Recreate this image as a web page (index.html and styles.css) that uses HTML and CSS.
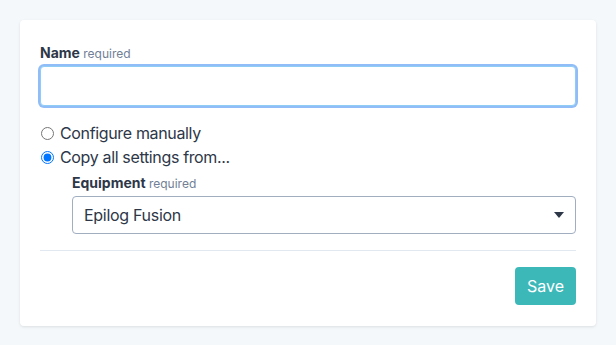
FILE: index.html
```html
<!DOCTYPE html>
<html lang="en">
<head>
  <meta charset="UTF-8" />
  <title>New Equipment</title>
  <link rel="stylesheet" href="styles.css">
</head>
<body>
  <form class="card">
    <div class="field">
      <label class="label" for="name">Name <span class="hint">required</span></label>
      <input type="text" id="name" class="text-input is-focused" />
    </div>

    <div class="choices">
      <label class="choice"><input type="radio" name="mode" /> Configure manually</label>
      <label class="choice"><input type="radio" name="mode" checked /> Copy all settings from...</label>
    </div>

    <div class="field nested">
      <label class="label" for="equipment">Equipment <span class="hint">required</span></label>
      <div class="select-wrap">
        <select id="equipment" class="select">
          <option>Epilog Fusion</option>
        </select>
        <svg class="caret" width="10" height="6" viewBox="0 0 10 6"><path d="M0 0h10L5 6z" fill="#2d3748"/></svg>
      </div>
    </div>

    <div class="actions">
      <button type="button" class="save-btn">Save</button>
    </div>
  </form>
</body>
</html>
```

FILE: styles.css
```css
body {
  margin: 0;
  padding: 20px;
  background: #f4f8fb;
  font-family: Inter, "Noto Sans", sans-serif;
  color: #2d3748;
}

.card {
  background: #fff;
  border-radius: 4px;
  box-shadow: 0 1px 3px rgba(0, 0, 0, 0.1);
  padding: 24px 20px 21px;
}

.label {
  display: block;
  font-size: 14px;
  font-weight: 700;
  line-height: 18px;
  margin-bottom: 3px;
}

.hint {
  font-size: 12px;
  font-weight: 400;
  color: #718096;
}

.text-input {
  display: block;
  box-sizing: border-box;
  width: 100%;
  height: 40px;
  border: 1px solid #a0aec0;
  border-radius: 4px;
  font-size: 16px;
  padding: 0 12px;
  outline: none;
}

.text-input.is-focused {
  border-color: #90cdf4;
  box-shadow: 0 0 0 2px #90bdf8;
}

.choices {
  margin-top: 15px;
}

.choice {
  display: flex;
  align-items: center;
  gap: 6px;
  font-size: 16px;
  letter-spacing: -0.35px;
  line-height: 24px;
}

.choice input {
  margin: 0 0 0 1px;
  width: 13px;
  height: 13px;
}

.nested {
  margin-top: 5px;
  margin-left: 32px;
}

.select-wrap {
  position: relative;
}

.select {
  display: block;
  box-sizing: border-box;
  width: 100%;
  height: 38px;
  appearance: none;
  background: #fff;
  border: 1px solid #a0aec0;
  border-radius: 4px;
  font-family: inherit;
  font-size: 16px;
  letter-spacing: -0.3px;
  color: #2d3748;
  padding: 0 11px;
}

.caret {
  position: absolute;
  right: 12px;
  top: 16px;
}

.actions {
  margin-top: 16px;
  border-top: 1px solid #e2e8f0;
  padding-top: 16px;
  display: flex;
  justify-content: flex-end;
}

.save-btn {
  height: 38px;
  padding: 0 12px;
  background: #3db8b9;
  color: #fff;
  border: none;
  border-radius: 4px;
  font-family: inherit;
  font-size: 16px;
}
```
